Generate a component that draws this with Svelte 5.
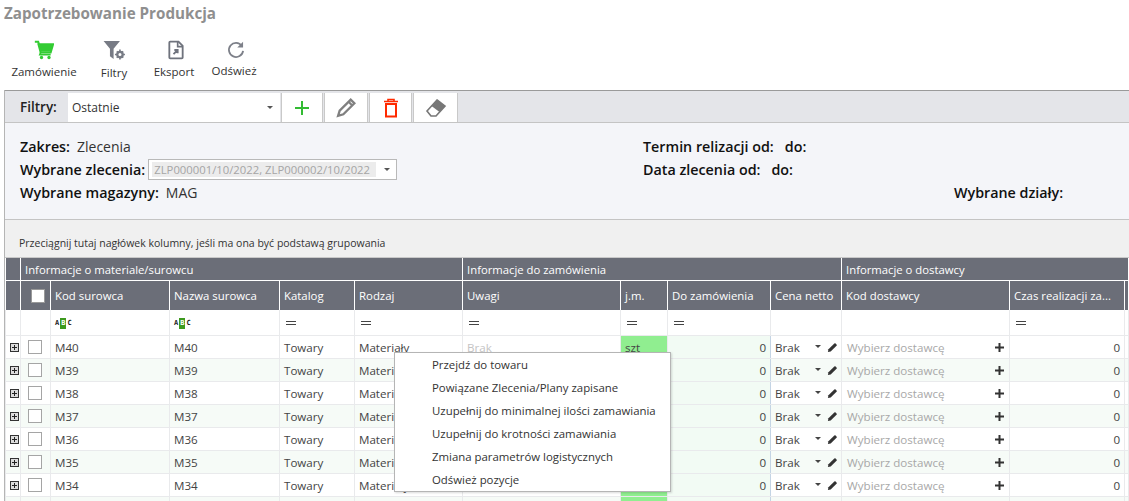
<script>
	const codes = ['M40', 'M39', 'M38', 'M37', 'M36', 'M35', 'M34'];
	const menu = [
		'Przejdź do towaru',
		'Powiązane Zlecenia/Plany zapisane',
		'Uzupełnij do minimalnej ilości zamawiania',
		'Uzupełnij do krotności zamawiania',
		'Zmiana parametrów logistycznych',
		'Odśwież pozycje'
	];
	const headers = [
		'Kod surowca', 'Nazwa surowca', 'Katalog', 'Rodzaj', 'Uwagi', 'j.m.',
		'Do zamówienia', 'Cena netto', 'Kod dostawcy', 'Czas realizacji za...'
	];
	const textFilters = [0, 1];
	const noFilter = [7, 8];
</script>

<div class="page">
	<h1>Zapotrzebowanie Produkcja</h1>

	<div class="toolbar">
		<button class="tool">
			<svg class="tool-icon" viewBox="0 0 24 24"><path d="M1 2h4l1 3h17l-3 10H8L5 4" fill="none" stroke="#33cc33" stroke-width="2.4"/><path d="M6 5h17l-3 9H8z" fill="#33cc33"/><path d="M8 15l-1 2.500h13" fill="none" stroke="#33cc33" stroke-width="2"/><circle cx="9" cy="21" r="2" fill="#33cc33"/><circle cx="18" cy="21" r="2" fill="#33cc33"/></svg>
			<span class="tool-label">Zamówienie</span>
		</button>
		<button class="tool">
			<svg class="tool-icon wide" viewBox="0 0 24 22"><path d="M0 1h18l-7 8.500V21l-4-3v-8.500z" fill="#777b85"/><circle cx="18" cy="16" r="3" fill="none" stroke="#777b85" stroke-width="2.600"/><path d="M18 10.500v2M18 19.500v2M12.500 16h2M21.500 16h2M14.500 12.500l1 1M20.500 18.500l1 1M14.500 19.500l1-1M20.500 13.500l1-1" stroke="#777b85" stroke-width="1.800"/></svg>
			<span class="tool-label lower">Filtry</span>
		</button>
		<button class="tool">
			<svg class="tool-icon shifted" viewBox="0 0 24 24"><path d="M5 2h10l5 5v14a1 1 0 0 1-1 1H5a1 1 0 0 1-1-1V3a1 1 0 0 1 1-1z" fill="none" stroke="#6f737d" stroke-width="2.200"/><path d="M14 2v6h6" fill="none" stroke="#6f737d" stroke-width="2"/><path d="M9 17l5-5m-4 0h4v4" fill="none" stroke="#6f737d" stroke-width="2.200"/></svg>
			<span class="tool-label">Eksport</span>
		</button>
		<button class="tool">
			<svg class="tool-icon shifted" viewBox="0 0 24 24"><path d="M19 7a8.500 8.500 0 1 0 1.500 6" fill="none" stroke="#7d8089" stroke-width="2.200"/><path d="M20.500 2v7h-7z" fill="#7d8089"/></svg>
			<span class="tool-label upper">Odśwież</span>
		</button>
	</div>

	<div class="content">
		<div class="filter-bar">
			<span class="filter-title">Filtry:</span>
			<div class="filter-select">Ostatnie<span class="caret"></span></div>
			<button class="fbtn w42">
				<svg viewBox="0 0 18 18" width="18" height="18"><path d="M9 2v14M2 9h14" stroke="#33bb33" stroke-width="2"/></svg>
			</button>
			<button class="fbtn w44">
				<svg viewBox="0 0 20 20" width="21" height="21"><path d="M2 18l1.500-5L14 2.500l3.500 3.500L7 16.500z" fill="none" stroke="#808080" stroke-width="2.200"/><path d="M12 4.500l3.500 3.500" stroke="#808080" stroke-width="2"/></svg>
			</button>
			<button class="fbtn w43">
				<svg viewBox="0 0 16 20" width="16" height="20"><path d="M1 3.500h14M5 3V1.500h6V3" fill="none" stroke="#ff2a00" stroke-width="1.600"/><path d="M3 6h10v12.500H3z" fill="none" stroke="#ff2a00" stroke-width="2"/></svg>
			</button>
			<button class="fbtn w45">
				<svg viewBox="0 0 22 20" width="22" height="20"><path d="M12 2l8 6-9 10H6l-4-5z" fill="#fff" stroke="#777" stroke-width="1.600"/><path d="M12 2l8 6-5.500 6-8-6z" fill="#777"/></svg>
			</button>
		</div>

		<div class="scope">
			<div class="scope-cell"><b>Zakres:</b> Zlecenia</div>
			<div class="scope-cell"><b>Termin relizacji od:</b> <b class="gap">do:</b></div>
			<div></div>
			<div class="scope-cell">
				<b>Wybrane zlecenia:</b>
				<div class="orders"><span class="orders-text">ZLP000001/10/2022, ZLP000002/10/2022</span><span class="caret"></span></div>
			</div>
			<div class="scope-cell"><b>Data zlecenia od:</b> <b class="gap">do:</b></div>
			<div></div>
			<div class="scope-cell"><b>Wybrane magazyny:</b> MAG</div>
			<div></div>
			<div class="scope-cell"><b>Wybrane działy:</b></div>
		</div>

		<div class="group-bar">Przeciągnij tutaj nagłówek kolumny, jeśli ma ona być podstawą grupowania</div>

		<table>
			<colgroup>
				<col class="c-exp" /><col class="c-chk" /><col class="c-code" /><col class="c-name" />
				<col class="c-cat" /><col class="c-kind" /><col class="c-note" /><col class="c-unit" />
				<col class="c-order" /><col class="c-price" /><col class="c-supp" /><col class="c-time" /><col />
			</colgroup>
			<thead>
				<tr class="bands">
					<th></th>
					<th colspan="5">Informacje o materiale/surowcu</th>
					<th colspan="4">Informacje do zamówienia</th>
					<th colspan="3">Informacje o dostawcy</th>
				</tr>
				<tr class="heads">
					<th></th>
					<th><span class="head-check"></span></th>
					{#each headers as h}
						<th>{h}</th>
					{/each}
					<th></th>
				</tr>
			</thead>
			<tbody>
				<tr class="filters">
					<td></td>
					<td></td>
					{#each headers as _, i}
						<td>
							{#if textFilters.includes(i)}
								<span class="abc">A<i>B</i>C</span>
							{:else if !noFilter.includes(i)}
								<span class="eq"></span>
							{/if}
						</td>
					{/each}
					<td></td>
				</tr>
				{#each codes as code, i}
					<tr class:alt={i % 2 === 1}>
						<td class="center"><span class="expander"></span></td>
						<td class="center"><span class="check"></span></td>
						<td>{code}</td>
						<td>{code}</td>
						<td>Towary</td>
						<td>Materiały</td>
						<td class="muted-light">Brak</td>
						<td class="unit">szt</td>
						<td class="num tint">0</td>
						<td class="price">
							<div class="price-inner">Brak<span class="caret dark"></span>
								<svg viewBox="0 0 12 12" width="11" height="11"><path d="M1 11l.6-3L8 1.600a1 1 0 0 1 1.400 0l1 1a1 1 0 0 1 0 1.400L4 10.400z" fill="#333"/></svg>
							</div>
						</td>
						<td class="supplier">
							<div class="supplier-inner">Wybierz dostawcę<svg viewBox="0 0 9 9" width="9" height="9"><path d="M4.500 0v9M0 4.500h9" stroke="#333" stroke-width="2"/></svg></div>
						</td>
						<td class="num">0</td>
						<td></td>
					</tr>
				{/each}
				<!-- next row, only its top edge is in view -->
				<tr class="alt">
					<td></td><td></td><td></td><td></td><td></td><td></td><td></td>
					<td class="unit"></td><td class="tint"></td><td></td><td></td><td></td><td></td>
				</tr>
			</tbody>
		</table>
	</div>

	<ul class="context-menu">
		{#each menu as item}
			<li>{item}</li>
		{/each}
	</ul>
</div>

<style>
	:global(body) {
		margin: 0;
		background: #fff;
	}

	.page {
		position: relative;
		height: 501px;
		width: 1129px;
		overflow: hidden;
		font-family: 'Open Sans', 'Noto Sans', sans-serif;
		font-size: 12px;
		color: #333;
	}

	h1 {
		margin: 0;
		height: 28px;
		padding-left: 4px;
		line-height: 27px;
		font-size: 15.200px;
		font-weight: 700;
		color: #8f8f8f;
	}

	/* Toolbar */
	.toolbar {
		display: grid;
		grid-template-columns: 80px 60px 60px 60px;
		height: 62px;
		padding-left: 4px;
	}

	.tool {
		display: flex;
		flex-direction: column;
		align-items: center;
		padding: 12px 0 0;
		border: none;
		background: none;
		font: inherit;
		font-size: 11.500px;
		color: #333;
		white-space: nowrap;
	}

	.tool-icon {
		width: 20px;
		height: 20px;
	}

	.tool-icon.wide {
		width: 23px;
	}

	.tool-icon.shifted {
		margin-left: 3px;
	}

	.tool-label {
		margin-top: 4px;
		line-height: 16px;
	}

	.tool-label.lower {
		margin-top: 5px;
	}

	.tool-label.upper {
		margin-top: 3px;
	}

	/* Filter bar */
	.content {
		margin-left: 4px;
		border-left: 1px solid #b5b5b5;
	}

	.filter-bar {
		display: flex;
		align-items: stretch;
		height: 29px;
		padding: 2px 0 0 0;
		border-top: 1px solid #9a9a9a;
		border-bottom: 1px solid #c4c4c4;
		background: #e4e5e9;
		box-sizing: content-box;
	}

	.filter-title {
		width: 63px;
		padding-left: 15px;
		box-sizing: border-box;
		line-height: 29px;
		font-size: 13.500px;
		font-weight: 600;
		color: #222;
	}

	.filter-select {
		position: relative;
		width: 212px;
		box-sizing: border-box;
		margin-right: 1px;
		padding-left: 4px;
		background: #fff;
		line-height: 29px;
		font-size: 12px;
	}

	.filter-select .caret {
		position: absolute;
		right: 7px;
		top: 13px;
	}

	.caret {
		display: inline-block;
		width: 0;
		height: 0;
		border-left: 3px solid transparent;
		border-right: 3px solid transparent;
		border-top: 3px solid #555;
	}

	.fbtn {
		display: flex;
		align-items: center;
		justify-content: center;
		padding: 0;
		margin-right: 1px;
		border: none;
		border-left: 1px solid #c9c9c9;
		border-right: 1px solid #c9c9c9;
		background: #fff;
		box-sizing: border-box;
	}

	.w42 {
		width: 42px;
	}

	.w43 {
		width: 43px;
	}

	.w44 {
		width: 44px;
	}

	.w45 {
		width: 45px;
	}

	/* Scope panel */
	.scope {
		display: grid;
		grid-template-columns: 623px 311px 1fr;
		grid-auto-rows: 23px;
		height: 97px;
		box-sizing: border-box;
		padding: 12px 0 0 15px;
		background: #f4f5f9;
		border-bottom: 1px solid #c4c4c4;
		font-size: 14px;
		color: #333;
	}

	.scope-cell {
		display: flex;
		align-items: center;
		gap: 7px;
		white-space: nowrap;
	}

	.scope b {
		font-size: 14.300px;
		font-weight: 600;
		color: #111;
	}

	.scope b.gap {
		margin-left: 4px;
	}

	.orders {
		display: flex;
		align-items: center;
		width: 249px;
		height: 21px;
		box-sizing: border-box;
		margin-left: -4px;
		padding: 2px 6px 2px 3px;
		border: 1px solid #b9b9b9;
		background: #fff;
	}

	.orders-text {
		flex: 1;
		overflow: hidden;
		padding: 0 2px;
		line-height: 15px;
		background: #ececec;
		font-size: 11.300px;
		color: #a5a5a5;
		white-space: nowrap;
	}

	.orders .caret {
		margin-left: 8px;
	}

	.group-bar {
		height: 38px;
		box-sizing: border-box;
		padding: 16px 0 0 14px;
		background: #f0f0f0;
		line-height: 15px;
		font-size: 10.500px;
		color: #333;
		border-bottom: 1px solid #c9c9c9;
	}

	/* Grid */
	table {
		width: 1124px;
		table-layout: fixed;
		border-collapse: collapse;
	}

	.c-exp { width: 15px; }
	.c-chk { width: 30px; }
	.c-code { width: 119px; }
	.c-name { width: 110px; }
	.c-cat { width: 75px; }
	.c-kind { width: 108px; }
	.c-note { width: 158px; }
	.c-unit { width: 47px; }
	.c-order { width: 103px; }
	.c-price { width: 71px; }
	.c-supp { width: 168px; }
	.c-time { width: 115px; }

	th {
		padding: 0 4px;
		background: #6b6e78;
		border: 1px solid #fff;
		border-top: none;
		font-weight: 400;
		text-align: left;
		color: #fff;
		white-space: nowrap;
		overflow: hidden;
	}

	.bands th {
		height: 22px;
		font-size: 11.300px;
		border-bottom: 1px solid #fff;
	}

	.heads th {
		height: 29px;
		font-size: 11.400px;
		border-bottom: none;
	}

	.heads th:first-child,
	.bands th:first-child {
		border-left: none;
	}

	.head-check {
		display: block;
		width: 12px;
		height: 12px;
		margin-left: 6px;
		background: #fff;
		border: 1px solid #999;
	}

	td {
		height: 22px;
		padding: 0 4px;
		border: 1px solid #e9eaec;
		border-top: none;
		font-size: 11.600px;
		color: #444;
		white-space: nowrap;
		overflow: hidden;
	}

	.filters td {
		height: 25px;
	}

	tr.alt td {
		background: #f6fbf7;
	}

	td.center {
		padding: 0;
		text-align: center;
	}

	.expander {
		position: relative;
		display: block;
		width: 7px;
		height: 7px;
		margin-left: 4px;
		background: #dcdcdc;
		border: 1px solid #333;
	}

	.expander::before {
		content: '';
		position: absolute;
		left: 1px;
		right: 1px;
		top: 3px;
		height: 1px;
		background: #222;
	}

	.expander::after {
		content: '';
		position: absolute;
		top: 1px;
		bottom: 1px;
		left: 3px;
		width: 1px;
		background: #222;
	}

	.check {
		display: block;
		width: 12px;
		height: 12px;
		margin-left: 7px;
		background: #fff;
		border: 1px solid #a5a5a5;
	}

	.abc {
		display: inline-block;
		font-family: 'DejaVu Sans Mono', monospace;
		font-size: 7px;
		line-height: 11px;
		font-weight: 700;
		color: #222;
		vertical-align: middle;
	}

	.abc i {
		display: inline-block;
		margin: 0 1px;
		padding: 0 1px;
		background: #3d9a1e;
		color: #fff;
		font-style: normal;
	}

	.eq {
		display: block;
		width: 10px;
		height: 2px;
		border-top: 1px solid #444;
		border-bottom: 1px solid #444;
		margin-left: 2px;
	}

	.muted-light {
		color: #c4c4c4;
	}

	td.unit,
	tr.alt td.unit {
		background: #90ee90;
	}

	td.num {
		text-align: right;
	}

	td.tint,
	tr.alt td.tint {
		background: #f2fbf4;
		border-right-color: #c4d4e4;
	}

	.price-inner {
		display: flex;
		align-items: center;
	}

	.price-inner .caret {
		margin-left: auto;
		margin-right: 6px;
		margin-bottom: 2px;
	}

	.caret.dark {
		border-top-color: #444;
	}

	.supplier {
		color: #a8a8a8;
		padding-left: 5px;
	}

	.supplier-inner {
		display: flex;
		align-items: center;
		justify-content: space-between;
		padding-right: 1px;
	}

	td.price {
		padding-right: 3px;
	}

	/* Context menu */
	.context-menu {
		position: absolute;
		left: 394px;
		top: 352px;
		width: 277px;
		height: 140px;
		box-sizing: border-box;
		margin: 0;
		padding: 0 0 0 37px;
		list-style: none;
		background: #fff;
		border: 1px solid #b5b5b5;
		box-shadow: 1px 1px 2px rgba(0, 0, 0, 0.15);
		font-size: 11.400px;
		color: #333;
	}

	.context-menu li {
		height: 23px;
		line-height: 23px;
		white-space: nowrap;
	}
</style>
